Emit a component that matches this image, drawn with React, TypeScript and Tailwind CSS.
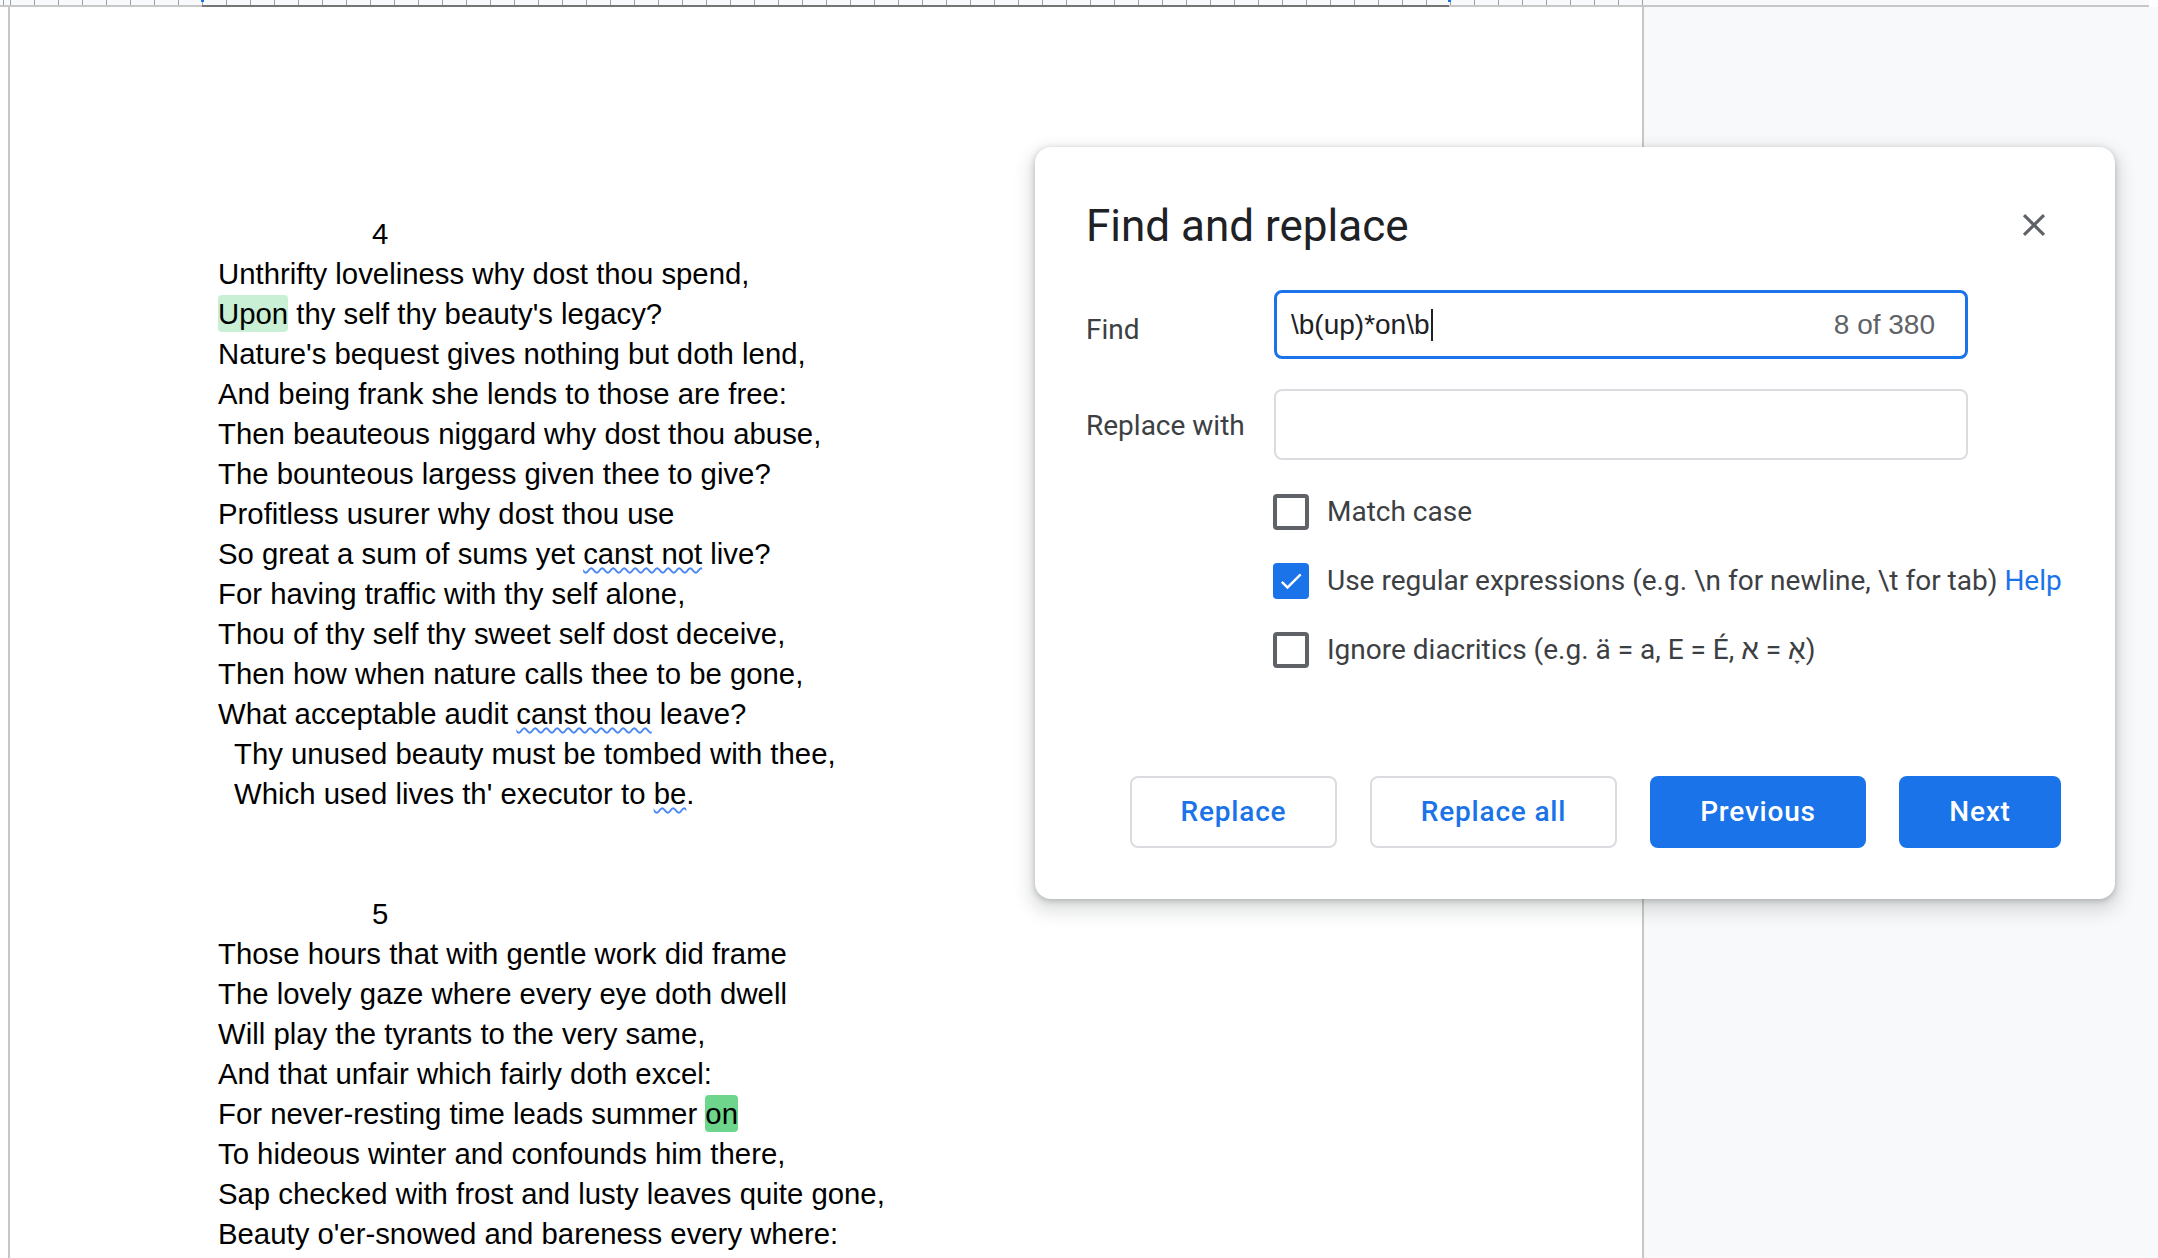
import React from "react";

type Seg = string | { t: string; k: "hl" | "cur" | "sq" };

const lines: { indent?: number; segs: Seg[] }[] = [
  { indent: 154, segs: ["4"] },
  { segs: ["Unthrifty loveliness why dost thou spend,"] },
  { segs: [{ t: "Upon", k: "hl" }, " thy self thy beauty's legacy?"] },
  { segs: ["Nature's bequest gives nothing but doth lend,"] },
  { segs: ["And being frank she lends to those are free:"] },
  { segs: ["Then beauteous niggard why dost thou abuse,"] },
  { segs: ["The bounteous largess given thee to give?"] },
  { segs: ["Profitless usurer why dost thou use"] },
  { segs: ["So great a sum of sums yet ", { t: "canst not", k: "sq" }, " live?"] },
  { segs: ["For having traffic with thy self alone,"] },
  { segs: ["Thou of thy self thy sweet self dost deceive,"] },
  { segs: ["Then how when nature calls thee to be gone,"] },
  { segs: ["What acceptable audit ", { t: "canst thou", k: "sq" }, " leave?"] },
  { indent: 16, segs: ["Thy unused beauty must be tombed with thee,"] },
  { indent: 16, segs: ["Which used lives th' executor to ", { t: "be", k: "sq" }, "."] },
  { segs: [""] },
  { segs: [""] },
  { indent: 154, segs: ["5"] },
  { segs: ["Those hours that with gentle work did frame"] },
  { segs: ["The lovely gaze where every eye doth dwell"] },
  { segs: ["Will play the tyrants to the very same,"] },
  { segs: ["And that unfair which fairly doth excel:"] },
  { segs: ["For never-resting time leads summer ", { t: "on", k: "cur" }] },
  { segs: ["To hideous winter and confounds him there,"] },
  { segs: ["Sap checked with frost and lusty leaves quite gone,"] },
  { segs: ["Beauty o'er-snowed and bareness every where:"] },
];

function renderSeg(s: Seg, i: number) {
  if (typeof s === "string") return <span key={i}>{s}</span>;
  if (s.k === "hl")
    return (
      <span key={i} className="inline-block h-[37px] rounded-[4px] bg-[#c9f0d5] leading-[37px]">
        {s.t}
      </span>
    );
  if (s.k === "cur")
    return (
      <span key={i} className="inline-block h-[37px] rounded-[4px] bg-[#6dd58c] leading-[37px]">
        {s.t}
      </span>
    );
  return (
    <span
      key={i}
      className="underline decoration-wavy decoration-[#4a87f2] decoration-[1.5px] underline-offset-[3px]"
    >
      {s.t}
    </span>
  );
}

function Checkbox({ checked }: { checked?: boolean }) {
  if (checked)
    return (
      <div className="flex h-[36px] w-[36px] shrink-0 items-center justify-center rounded-[4px] bg-[#1a73e8]">
        <svg width="28" height="28" viewBox="0 0 24 24">
          <path d="M9 16.17L4.83 12l-1.42 1.41L9 19 21 7l-1.41-1.41z" fill="#fff" />
        </svg>
      </div>
    );
  return <div className="h-[36px] w-[36px] shrink-0 rounded-[4px] border-[4px] border-[#5f6368]" />;
}

export default function App() {
  return (
    <div className="relative h-[1258px] w-[2158px] overflow-hidden bg-white">
      {/* Ruler */}
      <div className="relative h-[7px] w-full">
        <div className="absolute left-0 top-0 h-[5px] w-[2149px] bg-[#f8f9fa]" />
        <svg className="absolute left-0 top-0" width="1644" height="5">
          <defs>
            <pattern id="ticks" x="10" y="0" width="24" height="5" patternUnits="userSpaceOnUse">
              <rect x="0" y="0" width="1" height="5" fill="#9aa0a6" />
            </pattern>
          </defs>
          <rect x="0" y="0" width="1644" height="5" fill="url(#ticks)" />
          <rect x="3" y="0" width="1" height="5" fill="#9aa0a6" />
        </svg>
        <div className="absolute left-0 top-[5px] flex h-[2px] w-[2149px]">
          <div className="w-[202px] bg-[#c7c7c7]" />
          <div className="w-[1247px] bg-[#757575]" />
          <div className="flex-1 bg-[#c7c7c7]" />
        </div>
        <div className="absolute left-[201px] top-0 h-[2px] w-[3px] bg-[#1a73e8]" />
        <div className="absolute left-[1448px] top-0 h-[2px] w-[3px] bg-[#1a73e8]" />
      </div>

      <div className="flex h-[1251px]">
        <div className="ml-[8px] h-full w-[1636px] border-x-2 border-[#c7c7c7] bg-white pl-[208px] pt-[207px] font-['Liberation_Sans',Arial,sans-serif] text-[29.33px] leading-[40px] text-black">
          {lines.map((l, i) => (
            <div key={i} className="h-[40px] whitespace-pre" style={{ paddingLeft: l.indent ?? 0 }}>
              {l.segs.map(renderSeg)}
            </div>
          ))}
        </div>
        <div className="h-full flex-1 bg-[#f8f9fa]" />
      </div>

      {/* Dialog */}
      <div className="absolute left-[1035px] top-[147px] flex w-[1080px] flex-col rounded-[16px] bg-white pb-[51px] pl-[51px] pr-[54px] pt-[53px] font-['Roboto',Arial,sans-serif] shadow-[0_8px_16px_6px_rgba(60,64,67,0.15),0_2px_6px_rgba(60,64,67,0.3)]">
        <div className="flex h-[52px] items-center justify-between">
          <div className="text-[44px] leading-[52px] text-[#202124]">Find and replace</div>
          <svg className="mr-[8px] -mt-[2px]" width="38" height="38" viewBox="0 0 24 24">
            <path
              d="M19 6.41L17.59 5 12 10.59 6.41 5 5 6.41 10.59 12 5 17.59 6.41 19 12 13.41 17.59 19 19 17.59 13.41 12z"
              fill="#5f6368"
            />
          </svg>
        </div>

        <div className="mt-[38px] flex items-center">
          <div className="w-[188px] pt-[10px] text-[28px] text-[#3c4043]">Find</div>
          <div className="flex h-[69px] w-[694px] items-center justify-between rounded-[8px] border-[3px] border-[#1a73e8] pl-[14px] pr-[30px] font-['Liberation_Sans',Arial,sans-serif] text-[28px]">
            <div className="flex items-center text-[#202124]">
              <span>\b(up)*on\b</span>
              <span className="ml-[1px] h-[32px] w-[2px] bg-[#202124]" />
            </div>
            <span className="text-[#5f6368]">8 of 380</span>
          </div>
        </div>

        <div className="mt-[30px] flex items-center">
          <div className="w-[188px] pt-[3px] text-[28px] text-[#3c4043]">Replace with</div>
          <div className="h-[71px] w-[694px] rounded-[8px] border-2 border-[#dadce0]" />
        </div>

        <div className="mt-[17px] flex flex-col whitespace-nowrap pl-[187px] text-[28px] text-[#3c4043]">
          <div className="flex h-[69px] items-center gap-[18px]">
            <Checkbox />
            <span>Match case</span>
          </div>
          <div className="flex h-[69px] items-center gap-[18px]">
            <Checkbox checked />
            <span>
              Use regular expressions (e.g. \n for newline, \t for tab){" "}
              <span className="text-[#1a73e8]">Help</span>
            </span>
          </div>
          <div className="flex h-[69px] items-center gap-[18px]">
            <Checkbox />
            <span>Ignore diacritics (e.g. ä = a, E = É, {"א\u200E = \u200Eאָ"})</span>
          </div>
        </div>

        <div className="mt-[92px] flex justify-end gap-[33px] text-[28px] font-medium tracking-[0.8px]">
          <button className="h-[72px] w-[207px] rounded-[8px] border-2 border-[#dadce0] bg-white text-[#1a73e8]">
            Replace
          </button>
          <button className="h-[72px] w-[247px] rounded-[8px] border-2 border-[#dadce0] bg-white text-[#1a73e8]">
            Replace all
          </button>
          <button className="h-[72px] w-[216px] rounded-[8px] bg-[#1a73e8] text-white">Previous</button>
          <button className="h-[72px] w-[162px] rounded-[8px] bg-[#1a73e8] text-white">Next</button>
        </div>
      </div>
    </div>
  );
}
